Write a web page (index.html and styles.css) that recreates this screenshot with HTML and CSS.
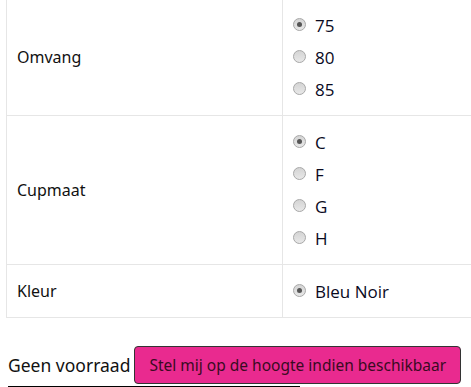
FILE: index.html
```html
<!DOCTYPE html>
<html lang="nl">
<head>
  <meta charset="UTF-8"/>
  <title>Product opties</title>
  <link rel="stylesheet" href="styles.css">
</head>
<body>
  <div class="table-wrap">
    <table class="options">
      <tr>
        <td class="label">Omvang</td>
        <td class="choices">
          <label class="choice"><input type="radio" name="omvang" checked> 75</label>
          <label class="choice"><input type="radio" name="omvang"> 80</label>
          <label class="choice"><input type="radio" name="omvang"> 85</label>
        </td>
      </tr>
      <tr>
        <td class="label">Cupmaat</td>
        <td class="choices">
          <label class="choice"><input type="radio" name="cup" checked> C</label>
          <label class="choice"><input type="radio" name="cup"> F</label>
          <label class="choice"><input type="radio" name="cup"> G</label>
          <label class="choice"><input type="radio" name="cup"> H</label>
        </td>
      </tr>
      <tr>
        <td class="label">Kleur</td>
        <td class="choices">
          <label class="choice"><input type="radio" name="kleur" checked> Bleu Noir</label>
        </td>
      </tr>
    </table>
  </div>
  <div class="stock">
    <span class="stock-text">Geen voorraad</span>
    <button class="notify">Stel mij op de hoogte indien beschikbaar</button>
  </div>
  <div class="rule"></div>
</body>
</html>
```

FILE: styles.css
```css
body {
  margin: 0;
  padding: 0 0 0 8px;
  font-family: "Noto Sans", sans-serif;
  color: #111;
}
.table-wrap {
  overflow: hidden;
  margin: -2px 0 0 -2px;
}
.options {
  border-collapse: collapse;
  width: 600px;
}
.options td {
  border: 1px solid #e6e6e6;
  padding: 10px;
  vertical-align: middle;
}
.label {
  width: 255px;
  font-size: 16px;
}
.choices {
  padding-left: 9px;
}
.choice {
  display: flex;
  align-items: center;
  height: 32px;
  font-family: "Open Sans", sans-serif;
  font-size: 17px;
  color: #0a0a1e;
}
.choice input {
  appearance: none;
  margin: -1px 9px 0 0;
  width: 13px;
  height: 13px;
  border-radius: 50%;
  border: 1px solid #a9a9a9;
  background: linear-gradient(#d4d4d4, #e8e8e8);
  display: grid;
  place-items: center;
}
.choice input:checked::after {
  content: "";
  width: 5px;
  height: 5px;
  border-radius: 50%;
  background: #555;
}
.stock {
  display: flex;
  align-items: center;
  gap: 4px;
  margin-top: 28px;
}
.stock-text {
  font-size: 17.5px;
}
.notify {
  font-family: "Noto Sans", sans-serif;
  font-size: 15.5px;
  color: #3a0a22;
  background: #e92a8f;
  border: 1px solid #333;
  border-radius: 4px;
  padding: 7px 14px;
}
.rule {
  width: 292px;
  border-top: 2px solid #000;
  margin-top: 2px;
}
```
